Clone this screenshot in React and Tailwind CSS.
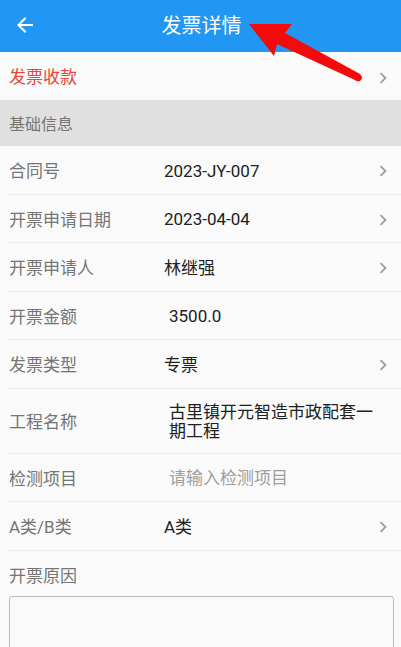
import React from "react";

const font = { fontFamily: "Roboto, 'Noto Sans CJK SC', sans-serif" };

function Chevron() {
  return (
    <svg width="10" height="12" viewBox="0 0 10 12" className="shrink-0">
      <path d="M2.5 1.2 L7.5 6 L2.5 10.8" fill="none" stroke="#9e9e9e" strokeWidth="1.8" />
    </svg>
  );
}

function Row({ label, value, chevron, valueClass = "text-[#212121]", offset = false, tall = false }) {
  return (
    <div className="ml-[8px] border-b border-[#ececec]">
      <div className={`flex items-center pr-[13px] pt-[3px] ${tall ? "h-[64px]" : "h-[47.5px]"}`}>
        <div className="w-[156px] shrink-0 pl-[1px] text-[17px] text-[#757575] leading-[20px]">{label}</div>
        <div className={`flex-1 text-[17px] leading-[19px] ${offset ? "pl-[5px]" : ""} ${valueClass}`}>{value}</div>
        {chevron ? <Chevron /> : <div className="w-[10px]" />}
      </div>
    </div>
  );
}

export default function App() {
  return (
    <div className="relative w-[401px] h-[647px] overflow-hidden bg-[#fafafa]" style={font}>
      <div className="h-[52px] bg-[#2196f3] flex items-center relative">
        <svg width="24" height="24" viewBox="0 0 24 24" className="absolute left-[13px] top-[13px]">
          <path fill="#fff" d="M20 11H7.83l5.59-5.59L12 4l-8 8 8 8 1.41-1.41L7.83 13H20v-2z" />
        </svg>
        <div className="flex-1 text-center text-white text-[20px] leading-[24px] pl-[2px]">发票详情</div>
      </div>
      <div className="h-[48px] flex items-center pl-[9px] pr-[13px] pt-[3px]">
        <div className="flex-1 text-[17px] text-[#e8453c]">发票收款</div>
        <Chevron />
      </div>
      <div className="h-[46px] bg-[#e0e0e0] flex items-center pl-[9px] pt-[3px] text-[16px] text-[#757575]">基础信息</div>
      <Row label="合同号" value="2023-JY-007" chevron />
      <Row label="开票申请日期" value="2023-04-04" chevron />
      <Row label="开票申请人" value="林继强" chevron />
      <Row label="开票金额" value="3500.0" offset />
      <Row label="发票类型" value="专票" chevron />
      <Row label="工程名称" value="古里镇开元智造市政配套一期工程" offset tall />
      <Row label="检测项目" value="请输入检测项目" offset valueClass="text-[#9e9e9e]" />
      <Row label="A类/B类" value="A类" chevron />
      <div className="pl-[9px] pt-[15px] text-[17px] leading-[20px] text-[#757575]">开票原因</div>
      <div className="ml-[9px] mr-[7px] mt-[10px] h-[80px] border border-[#bdbdbd] rounded-[3px] bg-[#fafafa]" />
      <svg className="absolute left-0 top-0 pointer-events-none" width="401" height="100" viewBox="0 0 401 100">
        <path
          d="M249 24 L292 24 L285 33 L360 74 Q364 78 360 81 Q357 82 355 80 L277 44 L274 56 Z"
          fill="#f30a0a"
        />
      </svg>
    </div>
  );
}
